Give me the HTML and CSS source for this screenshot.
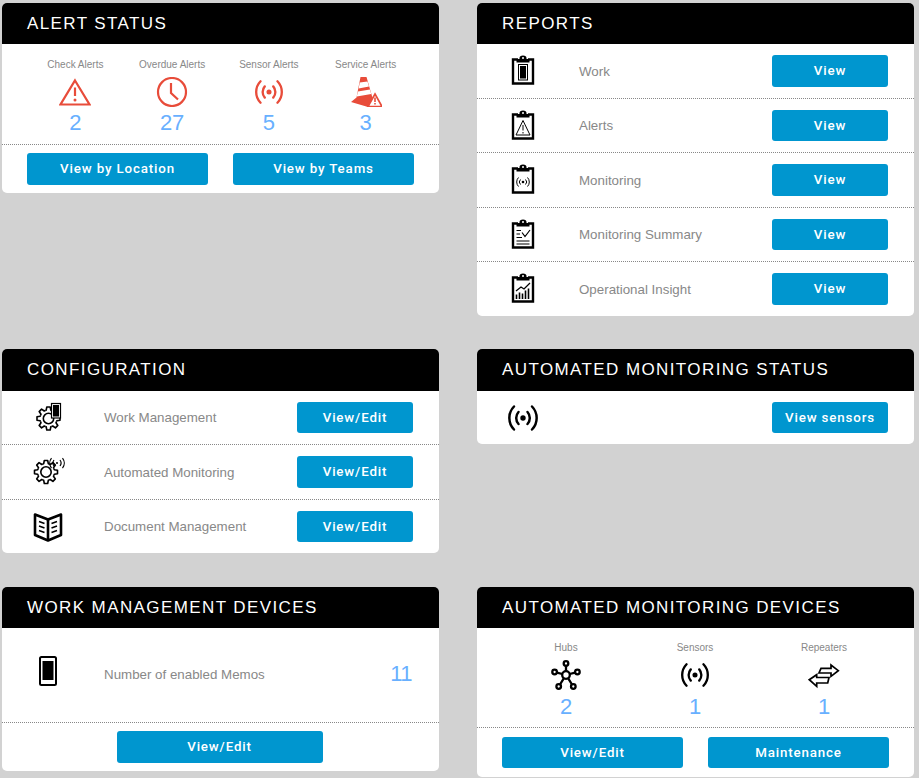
FILE: index.html
```html
<!DOCTYPE html>
<html lang="en">
<head>
<meta charset="utf-8">
<title>Dashboard</title>
<link rel="stylesheet" href="styles.css">
</head>
<body>
<svg class="defs" xmlns="http://www.w3.org/2000/svg">
  <symbol id="sensor" viewBox="0 0 32 32">
    <circle cx="16" cy="16" r="2.700" fill="currentColor"/>
    <path d="M11.500 10a9 9 0 0 0 0 12M20.500 10a9 9 0 0 1 0 12M7 4.500a16.500 16.500 0 0 0 0 23M25 4.500a16.500 16.500 0 0 1 0 23" fill="none" stroke="currentColor" stroke-width="2.500" stroke-linecap="round"/>
  </symbol>
  <symbol id="board" viewBox="0 0 26 32">
    <path d="M8 5.500H3V29.500H23V5.500H18" fill="none" stroke="#000" stroke-width="2.400"/>
    <path d="M6.500 8.500H19.500V5H16.500V4a3.500 2.500 0 0 0-7 0V5H6.500Z" fill="#000"/>
    <circle cx="13" cy="4" r="1" fill="#fff"/>
  </symbol>
  <g id="tooth"><path d="M-3.300-7.900L-2.300-8.300L-1.700-11.500H1.700L2.300-8.300L3.300-7.900"/></g>
  <symbol id="gear" viewBox="-13 -13 26 26">
    <circle r="9" fill="#fff"/>
    <g fill="none" stroke="#000" stroke-width="1.600" stroke-linejoin="round">
      <use href="#tooth"/>
      <use href="#tooth" transform="rotate(45)"/>
      <use href="#tooth" transform="rotate(90)"/>
      <use href="#tooth" transform="rotate(135)"/>
      <use href="#tooth" transform="rotate(180)"/>
      <use href="#tooth" transform="rotate(225)"/>
      <use href="#tooth" transform="rotate(270)"/>
      <use href="#tooth" transform="rotate(315)"/>
      <circle r="5.200"/>
    </g>
  </symbol>
</svg>

<main class="dashboard">
  <section class="card">
    <h2 class="card-title">ALERT STATUS</h2>
    <div class="stats stats-four">
      <div class="stat">
        <span class="stat-label">Check Alerts</span>
        <svg class="stat-icon alert" viewBox="0 0 32 30"><path d="M16 3.500L30.500 27.500H1.500Z" fill="none" stroke="currentColor" stroke-width="2.200"/><path d="M16 10.500V19" stroke="currentColor" stroke-width="2.200"/><circle cx="16" cy="23" r="1.500" fill="currentColor"/></svg>
        <span class="stat-value">2</span>
      </div>
      <div class="stat">
        <span class="stat-label">Overdue Alerts</span>
        <svg class="stat-icon alert" viewBox="0 0 32 30"><circle cx="16" cy="15" r="14" fill="none" stroke="currentColor" stroke-width="2.200"/><path d="M15 6V16L22 22.500" fill="none" stroke="currentColor" stroke-width="2.200"/></svg>
        <span class="stat-value">27</span>
      </div>
      <div class="stat">
        <span class="stat-label">Sensor Alerts</span>
        <svg class="stat-icon alert"><use href="#sensor"/></svg>
        <span class="stat-value">5</span>
      </div>
      <div class="stat">
        <span class="stat-label">Service Alerts</span>
        <svg class="stat-icon alert" viewBox="0 0 32 30"><path d="M10.500 0H16.500L24 26L18 30L1 25L6.500 20.500Z" fill="currentColor"/><path d="M9.800 5.500L17.500 4.500L19 9.500L8.600 11.500ZM7.900 14.500L20 12.500L21.200 17L6.800 19.500Z" fill="#fff"/><path d="M25 17L32 29.500H18Z" fill="#fff" stroke="currentColor" stroke-width="1.700"/><path d="M25 20.500V25M25 26V27.500" stroke="currentColor" stroke-width="1.600"/></svg>
        <span class="stat-value">3</span>
      </div>
    </div>
    <div class="actions actions-alert">
      <a class="btn btn-wide">View by Location</a>
      <a class="btn btn-wide">View by Teams</a>
    </div>
  </section>

  <section class="card">
    <h2 class="card-title">REPORTS</h2>
    <div class="row">
      <span class="row-icon"><svg class="board"><use href="#board"/><rect x="8.500" y="10.500" width="9" height="15.500" fill="none" stroke="#000"/><rect x="10" y="12" width="6" height="12.500" fill="#000"/></svg></span>
      <span class="row-label">Work</span><a class="btn btn-row">View</a>
    </div>
    <div class="row">
      <span class="row-icon"><svg class="board"><use href="#board"/><path d="M13 11.500L20 26H6Z" fill="none" stroke="#000"/><path d="M13 16V21.500M13 23V24.500" stroke="#000"/></svg></span>
      <span class="row-label">Alerts</span><a class="btn btn-row">View</a>
    </div>
    <div class="row">
      <span class="row-icon"><svg class="board"><use href="#board"/><circle cx="13" cy="19" r="1.300"/><path d="M10.500 16.500a3.500 3.500 0 0 0 0 5M15.500 16.500a3.500 3.500 0 0 1 0 5M8.500 14.500a6.500 6.500 0 0 0 0 9M17.500 14.500a6.500 6.500 0 0 1 0 9" fill="none" stroke="#000"/></svg></span>
      <span class="row-label">Monitoring</span><a class="btn btn-row">View</a>
    </div>
    <div class="row">
      <span class="row-icon"><svg class="board"><use href="#board"/><path d="M6.500 12.500H11M6.500 16H10M6.500 19.500H12M6.500 23H19.500M6.500 26H19.500M12 14.500L15 18.500L20 12" fill="none" stroke="#000" stroke-width="1.200"/></svg></span>
      <span class="row-label">Monitoring Summary</span><a class="btn btn-row">View</a>
    </div>
    <div class="row">
      <span class="row-icon"><svg class="board"><use href="#board"/><path d="M6 19L11 15L14 17L20 11" fill="none" stroke="#000" stroke-width="1.300"/><path d="M6.500 27V22.500M9.500 27V20.500M12.500 27V21.500M15.500 27V18.500M18.500 27V16.500" stroke="#000" stroke-width="1.600"/></svg></span>
      <span class="row-label">Operational Insight</span><a class="btn btn-row">View</a>
    </div>
  </section>

  <section class="card">
    <h2 class="card-title">CONFIGURATION</h2>
    <div class="row">
      <span class="row-icon"><svg class="wide-icon" viewBox="0 0 30 30"><use href="#gear" x="2.500" y="2.500" width="26" height="26"/><rect x="18.500" y="0.500" width="9" height="14.500" fill="#fff" stroke="#000" stroke-width="1.200"/><rect x="20" y="2" width="6" height="11.500" fill="#000"/></svg></span>
      <span class="row-label">Work Management</span><a class="btn btn-row">View/Edit</a>
    </div>
    <div class="row">
      <span class="row-icon"><svg class="wide-icon" viewBox="0 0 30 30"><use href="#gear" x="0" y="2" width="26" height="26"/><g fill="none" stroke="#000" stroke-width="1.200"><path d="M21 3a5 5 0 0 0 0 6M27 3a5 5 0 0 1 0 6M18.500 1a8 8 0 0 0 0 10M29.500 1a8 8 0 0 1 0 10"/></g><circle cx="24" cy="6" r="1"/></svg></span>
      <span class="row-label">Automated Monitoring</span><a class="btn btn-row">View/Edit</a>
    </div>
    <div class="row">
      <span class="row-icon"><svg class="wide-icon" viewBox="0 0 30 30"><path d="M15 7.500L2 2.500V23L15 28.500L28 23V2.500Z" fill="none" stroke="#000" stroke-width="2.600" stroke-linejoin="round"/><path d="M15 7.500V28" stroke="#000" stroke-width="2.600"/><path d="M6 9.500L11.500 11.500M6 14L11.500 16M6 18.500L11.500 20.500M24 9.500L18.500 11.500M24 14L18.500 16M24 18.500L18.500 20.500" stroke="#000" stroke-width="1.600"/></svg></span>
      <span class="row-label">Document Management</span><a class="btn btn-row">View/Edit</a>
    </div>
  </section>

  <section class="card">
    <h2 class="card-title">AUTOMATED MONITORING STATUS</h2>
    <div class="row">
      <span class="row-icon"><svg class="sensor-large"><use href="#sensor"/></svg></span>
      <span class="row-label"></span><a class="btn btn-row">View sensors</a>
    </div>
  </section>

  <section class="card">
    <h2 class="card-title">WORK MANAGEMENT DEVICES</h2>
    <div class="memo">
      <span class="row-icon"><svg class="phone" viewBox="0 0 18 30"><rect x="1" y="1" width="16" height="28" rx="1.500" fill="#fff" stroke="#000" stroke-width="2"/><rect x="3.500" y="5" width="11" height="19" fill="#000"/></svg></span>
      <span class="row-label">Number of enabled Memos</span>
      <span class="memo-value">11</span>
    </div>
    <div class="actions actions-center">
      <a class="btn btn-memo">View/Edit</a>
    </div>
  </section>

  <section class="card">
    <h2 class="card-title">AUTOMATED MONITORING DEVICES</h2>
    <div class="stats stats-three">
      <div class="stat">
        <span class="stat-label">Hubs</span>
        <svg class="stat-icon dark" viewBox="0 0 32 30"><g fill="none" stroke="#000" stroke-width="2.300"><circle cx="16" cy="15" r="3.800"/><circle cx="16" cy="3.500" r="2.300"/><circle cx="4.600" cy="12" r="2.300"/><circle cx="27.400" cy="12" r="2.300"/><circle cx="8.700" cy="26.500" r="2.300"/><circle cx="23.300" cy="26.500" r="2.300"/><path d="M16 5.500V11M7 12.600L12.300 14M25 12.600L19.700 14M10 24.500L13.800 18.300M22 24.500L18.200 18.300"/></g></svg>
        <span class="stat-value">2</span>
      </div>
      <div class="stat">
        <span class="stat-label">Sensors</span>
        <svg class="stat-icon dark"><use href="#sensor"/></svg>
        <span class="stat-value">1</span>
      </div>
      <div class="stat">
        <span class="stat-label">Repeaters</span>
        <svg class="stat-icon dark" viewBox="0 0 32 30"><path d="M13 8.300H23V5L30.300 10.700L23 16.300V13H11Z" fill="#fff" stroke="#000" stroke-width="1.700"/><path d="M8.700 14.700V17.500H21L19.700 23H8.700V26.300L1.300 19.700Z" fill="#fff" stroke="#000" stroke-width="1.700"/></svg>
        <span class="stat-value">1</span>
      </div>
    </div>
    <div class="actions actions-devices">
      <a class="btn btn-wide">View/Edit</a>
      <a class="btn btn-wide">Maintenance</a>
    </div>
  </section>
</main>
</body>
</html>
```

FILE: styles.css
```css
* { box-sizing: border-box; }

html, body {
  margin: 0;
  background: #d2d2d2;
}

body {
  font-family: "Liberation Sans", Arial, sans-serif;
  height: 778px;
  overflow: hidden;
}

.defs { display: none; }

.dashboard {
  display: grid;
  grid-template-columns: 437px 437px;
  grid-template-rows: 313.4px 204.6px auto;
  column-gap: 38px;
  row-gap: 33px;
  padding: 3px 0 0 2px;
}

.card {
  align-self: start;
  background: #fff;
  border-radius: 5px;
  overflow: hidden;
}

.card-title {
  margin: 0;
  height: 41.4px;
  padding-left: 25px;
  background: #000;
  color: #fff;
  font-size: 17px;
  font-weight: 400;
  letter-spacing: 1.4px;
  line-height: 41px;
}

.row {
  display: flex;
  align-items: center;
  height: 54.5px;
  padding-right: 26px;
  border-bottom: 1px dotted #888;
}

.row:last-child {
  height: 53.5px;
  border-bottom: 0;
}

.row-icon {
  display: flex;
  justify-content: center;
  flex: 0 0 92px;
  margin-right: 10px;
}

.row-label {
  flex: 1;
  color: #888;
  font-size: 13.33px;
}

.board { width: 26px; height: 32px; margin-top: -2px; }
.wide-icon { width: 30px; height: 30px; overflow: visible; }
.sensor-large { width: 32px; height: 32px; color: #000; }
.phone { width: 18px; height: 30px; margin-top: -6px; }

.btn {
  display: block;
  height: 31.6px;
  background: #0096cf;
  border-radius: 3px;
  color: #fff;
  font-family: Roboto, "Liberation Sans", sans-serif;
  font-size: 13.33px;
  font-weight: 500;
  letter-spacing: 0.85px;
  line-height: 32px;
  text-align: center;
}

.btn-row { flex: 0 0 116px; }
.btn-wide { flex: 0 0 181px; }
.btn-memo { flex: 0 0 206px; margin-right: 2px; }

.stats {
  display: grid;
  border-bottom: 1px dotted #888;
}

.stats-four {
  grid-template-columns: repeat(4, 96.75px);
  height: 100.6px;
  padding: 14.5px 0 0 25px;
}

.stats-three {
  grid-template-columns: repeat(3, 129px);
  height: 99.6px;
  padding: 13.5px 0 0 24.5px;
}

.stat {
  display: flex;
  flex-direction: column;
  align-items: center;
}

.stat-label {
  color: #888;
  font-size: 10px;
  line-height: 12px;
}

.stat-icon {
  width: 32px;
  height: 30px;
  margin-top: 6px;
}

.stat-icon.alert { color: #e84c3a; }
.stat-icon.dark { color: #000; }

.stat-value {
  margin-top: 3px;
  color: #68b0ff;
  font-size: 22px;
  line-height: 26px;
}

.stats-three .stat-value { margin-top: 4px; }

.actions {
  display: flex;
  padding-top: 8px;
  padding-bottom: 8px;
}

.actions-alert { gap: 25px; padding-left: 25px; }
.actions-devices { gap: 25px; padding-left: 25px; padding-top: 8.6px; padding-bottom: 9px; }
.actions-center { justify-content: center; }

.memo {
  display: flex;
  align-items: center;
  height: 94.6px;
  padding-right: 26px;
  padding-bottom: 2px;
  border-bottom: 1px dotted #888;
}

.memo-value {
  margin-right: 1px;
  color: #68b0ff;
  font-size: 22px;
  letter-spacing: -0.5px;
}
```
